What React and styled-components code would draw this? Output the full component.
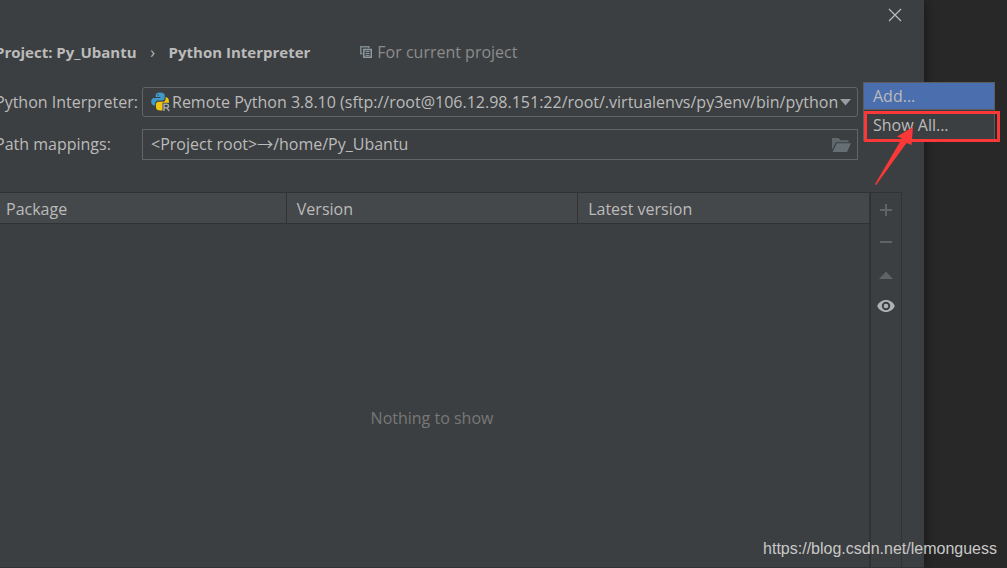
import React, { useState } from 'react'
import styled, { createGlobalStyle } from 'styled-components'

const GlobalStyle = createGlobalStyle`
    * {
        box-sizing: border-box;
    }
    body {
        margin: 0;
        overflow: hidden;
        background: #282828;
        color: #bbbbbb;
        font-family: 'Open Sans', 'Noto Sans CJK SC', 'Noto Sans', sans-serif;
        font-size: 16px;
        line-height: 22px;
    }
    button, input, select {
        font: inherit;
        color: inherit;
    }
`

const Desktop = styled.div`
    position: relative;
    display: flex;
    min-height: 100vh;
    padding-right: 83px;
`

const Dialog = styled.main`
    position: relative;
    flex: 1;
    min-width: 0;
    display: flex;
    flex-direction: column;
    margin-left: -25px;
    padding: 0 22px 0 20px;
    background: #3c3f41;
    border-bottom: 1px solid #323232;
    box-shadow: 0 0 12px rgba(0, 0, 0, 0.5);
`

const TitleBar = styled.div`
    display: flex;
    justify-content: flex-end;
    align-items: center;
    height: 30px;
`

const IconButton = styled.button`
    display: flex;
    align-items: center;
    justify-content: center;
    padding: 0;
    border: 0;
    background: none;
    cursor: pointer;
    color: ${({ $color }) => $color || '#bbbbbb'};
    :disabled {
        cursor: default;
    }
`

const Breadcrumb = styled.header`
    display: flex;
    align-items: center;
    padding: 11px 0 24px;
    white-space: nowrap;
`

const Crumb = styled.span`
    font-size: 15px;
    font-weight: 700;
`

const Separator = styled.span`
    width: 32px;
    text-align: center;
`

const Scope = styled.span`
    display: flex;
    align-items: center;
    gap: 5px;
    margin-left: 50px;
    color: #8c8c8c;
`

const Form = styled.form`
    display: grid;
    grid-template-columns: 147px minmax(0, 1fr);
    align-items: center;
    row-gap: 12px;
    padding-right: 44px;
`

const Label = styled.label`
    padding-bottom: 1px;
    white-space: nowrap;
`

const Field = styled.div`
    display: flex;
    align-items: center;
    gap: 2px;
    height: ${({ $rounded }) => ($rounded ? '30px' : '31px')};
    padding: 0 6px 0 8px;
    border: 1px solid #646464;
    border-radius: ${({ $rounded }) => ($rounded ? '3px' : '0')};
`

const Select = styled.select`
    flex: 1;
    min-width: 0;
    padding: 0 0 1px;
    border: 0;
    outline: 0;
    appearance: none;
    background: none;
    text-overflow: clip;
`

const Input = styled.input`
    flex: 1;
    min-width: 0;
    padding: 0 0 1px;
    border: 0;
    outline: 0;
    background: none;
`

const Packages = styled.section`
    flex: 1;
    display: flex;
    margin-top: 32px;
    border-top: 1px solid #323232;
`

const TablePane = styled.div`
    flex: 1;
    display: flex;
    flex-direction: column;
`

const Table = styled.table`
    width: 100%;
    table-layout: fixed;
    border-collapse: collapse;
`

const HeadCell = styled.th`
    height: 30px;
    padding: 2px 10px 0 11px;
    background: #45484a;
    border-bottom: 1px solid #323232;
    font-weight: 400;
    text-align: left;
    & + & {
        padding-left: 10px;
        border-left: 1px solid #323232;
    }
`

const Empty = styled.p`
    flex: 1;
    display: flex;
    align-items: center;
    justify-content: center;
    margin: 0;
    padding-top: 46px;
    color: #787878;
`

const Toolbar = styled.div`
    display: flex;
    flex-direction: column;
    align-items: center;
    gap: 14px;
    width: 33px;
    padding-top: 8px;
    border-left: 2px solid #323232;
    border-right: 1px solid #323232;
`

const Menu = styled.div`
    position: absolute;
    top: 82px;
    right: -71px;
    width: 132px;
    background: #3c3f41;
    border: 1px solid #5a5c5e;
`

const MenuItem = styled.button`
    display: block;
    width: 100%;
    height: ${({ $selected }) => ($selected ? '27px' : '30px')};
    padding: 0 9px;
    border: 0;
    border-bottom: ${({ $selected }) => ($selected ? '1px solid #5a5c5e' : '0')};
    background: ${({ $selected }) => ($selected ? '#4b6eaf' : 'none')};
    text-align: left;
    cursor: pointer;
`

const Highlight = styled.div`
    position: absolute;
    top: 111px;
    right: -76px;
    width: 136px;
    height: 31px;
    border: 3px solid #fb3838;
    pointer-events: none;
`

const Arrow = styled.svg`
    position: absolute;
    top: 124px;
    right: 8px;
    pointer-events: none;
`

const Watermark = styled.a`
    position: absolute;
    right: 10px;
    bottom: 8px;
    color: #c8c8c8;
    font-family: 'Liberation Sans', Arial, sans-serif;
    font-size: 16px;
    text-decoration: none;
`

const PythonIcon = () => (
    <svg width="19" height="20" viewBox="0 0 19 20" aria-hidden="true">
        <path fill="#4199c7" d="M9 0.5c-3 0-4.3 1-4.3 2.6v2h4.6v.8H3C1.200 5.900.2 7.300.2 9.600s1.100 3.800 2.600 3.800h1.400v-2c0-1.700 1.300-2.900 2.900-2.900h4.200c1.300 0 2.400-1.100 2.400-2.400v-3C13.700 1.400 12.200.5 9 .5z" />
        <circle cx="6.900" cy="2.900" r=".8" fill="#2b5b78" />
        <path fill="#f2c511" d="M14.600 5.300v1.600c0 1.600-1.200 2.900-2.800 2.900H7.400c-1.300 0-2.400 1.100-2.400 2.400v3.400c0 1.900 1.700 2.900 4.400 2.900 1 0 1.700-.1 2.100-.3V10.700h6.500c.1-3.200-.8-5.400-3.400-5.400z" />
        <path fill="none" stroke="#9da5aa" strokeWidth="1.500" d="M13 19v-6.700h2.600c2.600 0 2.600 3.500 0 3.500H13m2.600 0L18.300 19" />
    </svg>
)

const CopyIcon = () => (
    <svg width="12" height="12" viewBox="0 0 12 12" aria-hidden="true">
        <path fill="none" stroke="#7f8b91" strokeWidth="1.500" d="M2.500 7.800H.8V.8h8v1.500" />
        <path fill="none" stroke="#8f9ba1" strokeWidth="1.500" d="M3.800 3.500h7.500v7.700H3.800z" />
        <path stroke="#8f9ba1" d="M5.500 5.500h4M5.500 7.500h4M5.500 9.400h4" />
    </svg>
)

const FolderIcon = () => (
    <svg width="19" height="14" viewBox="0 0 19 14">
        <path fill="#5e686d" d="M0 0h6.500l2 2.200h8v2H4L0 12z" />
        <path fill="#657075" d="M4.700 5.200H19L15 14H.6z" />
    </svg>
)

const interpreters = [
    'Remote Python 3.8.10 (sftp://root@106.12.98.151:22/root/.virtualenvs/py3env/bin/python',
]
const columns = ['Package', 'Version', 'Latest version']

const App = () => {
    const [interpreter, setInterpreter] = useState(interpreters[0])
    const [mappings, setMappings] = useState('<Project root>→/home/Py_Ubantu')

    return (
        <>
            <GlobalStyle />
            <Desktop>
                <Dialog>
                    <TitleBar>
                        <IconButton aria-label="Close">
                            <svg width="14" height="14" viewBox="0 0 14 14">
                                <path stroke="currentColor" strokeWidth="1.200" d="M1 1l12 12M13 1L1 13" />
                            </svg>
                        </IconButton>
                    </TitleBar>

                    <Breadcrumb>
                        <Crumb>Project: Py_Ubantu</Crumb>
                        <Separator>›</Separator>
                        <Crumb>Python Interpreter</Crumb>
                        <Scope><CopyIcon /> For current project</Scope>
                    </Breadcrumb>

                    <Form>
                        <Label htmlFor="interpreter">Python Interpreter:</Label>
                        <Field $rounded>
                            <PythonIcon />
                            <Select
                                id="interpreter"
                                value={interpreter}
                                onChange={(e) => setInterpreter(e.target.value)}
                            >
                                {interpreters.map((name) => (
                                    <option key={name}>{name}</option>
                                ))}
                            </Select>
                            <svg width="11" height="7" viewBox="0 0 11 7" aria-hidden="true">
                                <path fill="#9a9da0" d="M0 0h11L5.500 6.500z" />
                            </svg>
                        </Field>
                        <Label htmlFor="mappings">Path mappings:</Label>
                        <Field>
                            <Input
                                id="mappings"
                                value={mappings}
                                onChange={(e) => setMappings(e.target.value)}
                            />
                            <IconButton type="button" aria-label="Browse">
                                <FolderIcon />
                            </IconButton>
                        </Field>
                    </Form>

                    <Packages>
                        <TablePane>
                            <Table>
                                <thead>
                                    <tr>
                                        {columns.map((name) => (
                                            <HeadCell key={name}>{name}</HeadCell>
                                        ))}
                                    </tr>
                                </thead>
                            </Table>
                            <Empty>Nothing to show</Empty>
                        </TablePane>
                        <Toolbar>
                            <IconButton $color="#606364" disabled aria-label="Install">
                                <svg width="18" height="18" viewBox="0 0 18 18">
                                    <path stroke="currentColor" strokeWidth="2" d="M3 9h12M9 3v12" />
                                </svg>
                            </IconButton>
                            <IconButton $color="#606364" disabled aria-label="Uninstall">
                                <svg width="18" height="18" viewBox="0 0 18 18">
                                    <path stroke="currentColor" strokeWidth="2" d="M3 9h12" />
                                </svg>
                            </IconButton>
                            <IconButton $color="#606364" disabled aria-label="Upgrade">
                                <svg width="18" height="18" viewBox="0 0 18 18">
                                    <path fill="currentColor" d="M2 14L9 6.500l7 7.500z" />
                                </svg>
                            </IconButton>
                            <IconButton $color="#afb1b3" aria-label="Show early releases">
                                <svg width="18" height="18" viewBox="0 0 18 18">
                                    <path
                                        fill="currentColor"
                                        fillRule="evenodd"
                                        d="M9 3C5 3 1.600 5.400.2 9 1.600 12.600 5 15 9 15s7.400-2.400 8.800-6C16.400 5.400 13 3 9 3zm0 1.800a4.200 4.200 0 1 1 0 8.400 4.200 4.200 0 0 1 0-8.400z"
                                    />
                                    <circle cx="9" cy="9" r="2.300" fill="currentColor" />
                                </svg>
                            </IconButton>
                        </Toolbar>
                    </Packages>

                    <Menu>
                        <MenuItem $selected>Add...</MenuItem>
                        <MenuItem>Show All...</MenuItem>
                    </Menu>
                    <Highlight />
                    <Arrow width="42" height="62" viewBox="0 0 42 62" aria-hidden="true">
                        <path fill="#fb3838" d="M39 3L23 12.500l5 2L.8 60.500l1.200.5L32.500 19l5 2z" />
                    </Arrow>
                </Dialog>
                <Watermark href="https://blog.csdn.net/lemonguess">https://blog.csdn.net/lemonguess</Watermark>
            </Desktop>
        </>
    )
}

export default App
